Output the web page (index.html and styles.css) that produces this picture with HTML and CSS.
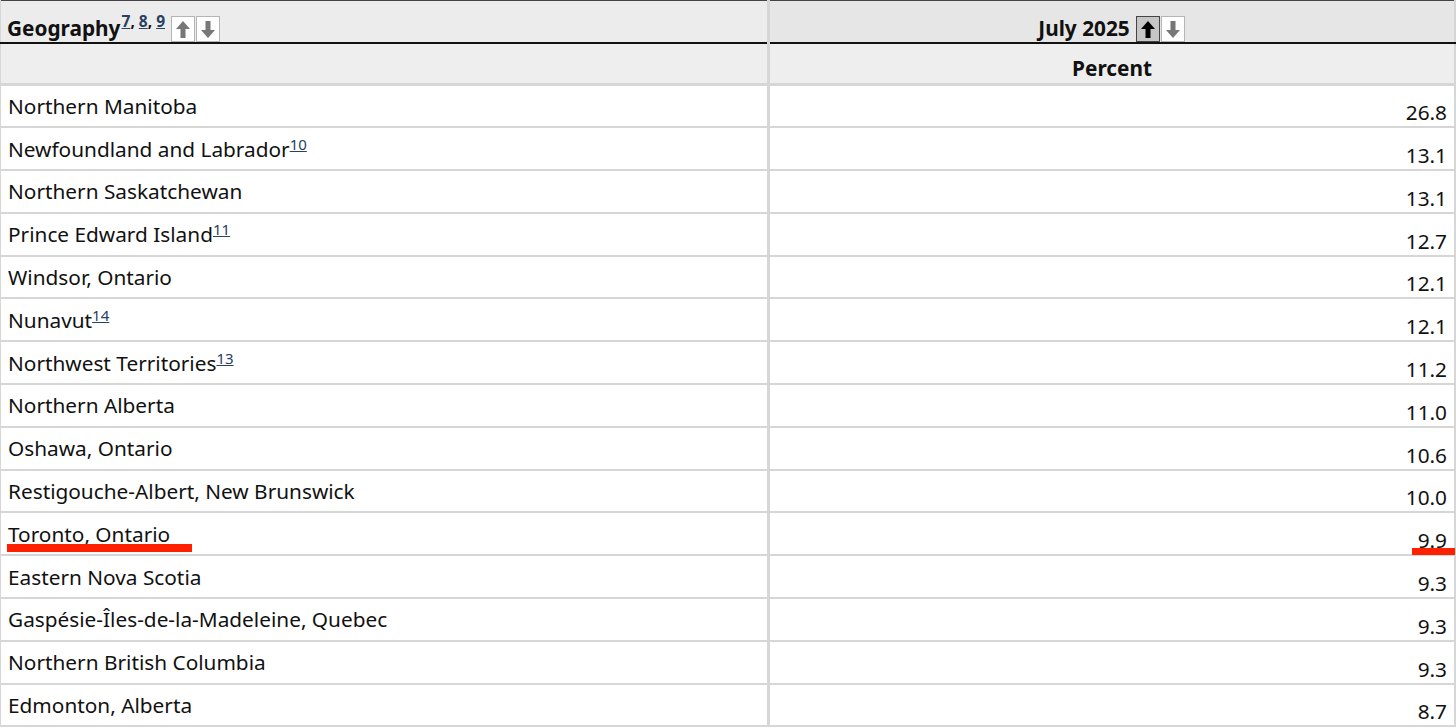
FILE: index.html
```html
<!DOCTYPE html>
<html lang="en">
<head>
<meta charset="utf-8">
<link rel="stylesheet" href="styles.css">
</head>
<body>
<table class="data">
  <thead>
    <tr class="head1">
      <th class="geo">Geography<sup><a href="#">7</a>, <a href="#">8</a>, <a href="#">9</a></sup><span class="sort"><span class="btn"><svg viewBox="0 0 18 22" width="18" height="22"><path d="M9 3 L16 11 H11.5 V20 H6.5 V11 H2 Z" fill="#777"/></svg></span><span class="btn"><svg viewBox="0 0 18 22" width="18" height="22"><path d="M9 20 L16 12 H11.5 V3 H6.5 V12 H2 Z" fill="#777"/></svg></span></span></th>
      <th class="period">July 2025<span class="sort"><span class="btn active"><svg viewBox="0 0 18 22" width="18" height="22"><path d="M9 3 L16 11 H11.5 V20 H6.5 V11 H2 Z" fill="#000"/></svg></span><span class="btn"><svg viewBox="0 0 18 22" width="18" height="22"><path d="M9 20 L16 12 H11.5 V3 H6.5 V12 H2 Z" fill="#777"/></svg></span></span></th>
    </tr>
    <tr class="head2">
      <th class="blank"></th>
      <th class="unit">Percent</th>
    </tr>
  </thead>
  <tbody>
    <tr><th>Northern Manitoba</th><td>26.8</td></tr>
    <tr><th>Newfoundland and Labrador<sup><a href="#">10</a></sup></th><td>13.1</td></tr>
    <tr><th>Northern Saskatchewan</th><td>13.1</td></tr>
    <tr><th>Prince Edward Island<sup><a href="#">11</a></sup></th><td>12.7</td></tr>
    <tr><th>Windsor, Ontario</th><td>12.1</td></tr>
    <tr><th>Nunavut<sup><a href="#">14</a></sup></th><td>12.1</td></tr>
    <tr><th>Northwest Territories<sup><a href="#">13</a></sup></th><td>11.2</td></tr>
    <tr><th>Northern Alberta</th><td>11.0</td></tr>
    <tr><th>Oshawa, Ontario</th><td>10.6</td></tr>
    <tr><th>Restigouche-Albert, New Brunswick</th><td>10.0</td></tr>
    <tr class="marked"><th><span class="mark-name">Toronto, Ontario</span></th><td><span class="mark-val">9.9</span></td></tr>
    <tr><th>Eastern Nova Scotia</th><td>9.3</td></tr>
    <tr><th>Gaspésie-Îles-de-la-Madeleine, Quebec</th><td>9.3</td></tr>
    <tr><th>Northern British Columbia</th><td>9.3</td></tr>
    <tr><th>Edmonton, Alberta</th><td>8.7</td></tr>
  </tbody>
</table>
</body>
</html>
```
FILE: styles.css
```css
* { box-sizing: border-box; }
html, body {
  margin: 0;
  padding: 0;
  background: #fff;
  overflow: hidden;
}
body {
  font-family: "Noto Sans", "Open Sans", sans-serif;
  font-size: 20.8px;
  color: #111;
}
.data {
  width: 1456px;
  border-collapse: collapse;
  table-layout: fixed;
  border-top: 1px solid #444;
}
.data th, .data td {
  border: 2px solid #d6d6d6;
  padding: 0 7px;
}
.data tr > :first-child { width: 768px; border-left: 1px solid #d6d6d6; border-right: 3px solid #d6d6d6; }
.data tr > :last-child { border-right: 2px solid #d6d6d6; }

.head1 th {
  height: 42px;
  background: #ececec;
  font-weight: 700;
  vertical-align: bottom;
  padding-bottom: 0;
  border-top: none;
  border-bottom: 2px solid #111;
  line-height: 28px;
}
.head1 th.geo { text-align: left; padding-left: 6px; }
.head1 th.period { text-align: center; background: #e6e6e6; padding-left: 6px; }
.head2 th {
  height: 42px;
  background: #eeeeee;
  font-weight: 700;
  vertical-align: bottom;
  text-align: center;
  padding-bottom: 0;
  line-height: 30px;
  border-bottom: 3px solid #d6d6d6;
}
sup { font-size: 15px; line-height: 0; vertical-align: 7px; }
sup a { color: #284162; text-decoration: underline; }
.head1 sup { font-weight: 700; margin-left: 1px; vertical-align: 9px; font-size: 15.5px; }

.sort {
  display: inline-flex;
  gap: 1px;
  vertical-align: -4px;
  margin-left: 6px;
}
.btn {
  display: inline-flex;
  width: 24px;
  height: 26px;
  align-items: center;
  justify-content: center;
  border: 1px solid #b5b5b5;
  background: #fff;
}
.btn.active {
  background: #c6c6c6;
  border-color: #444;
}

tbody tr { height: 42.8px; }
tbody th {
  font-weight: 400;
  text-align: left;
  vertical-align: middle;
  padding-top: 0;
  line-height: 30px;
}
tbody td {
  text-align: right;
  vertical-align: bottom;
  padding-right: 5px;
  padding-bottom: 0;
  line-height: 28px;
}
.mark-name, .mark-val { position: relative; }
.mark-name::after {
  content: "";
  position: absolute;
  left: -1px;
  right: -22px;
  bottom: -4px;
  height: 8px;
  background: #ff2000;
}
.mark-val::after {
  content: "";
  position: absolute;
  left: -6px;
  right: -8px;
  bottom: -1px;
  height: 7px;
  background: #ff2000;
}
```
